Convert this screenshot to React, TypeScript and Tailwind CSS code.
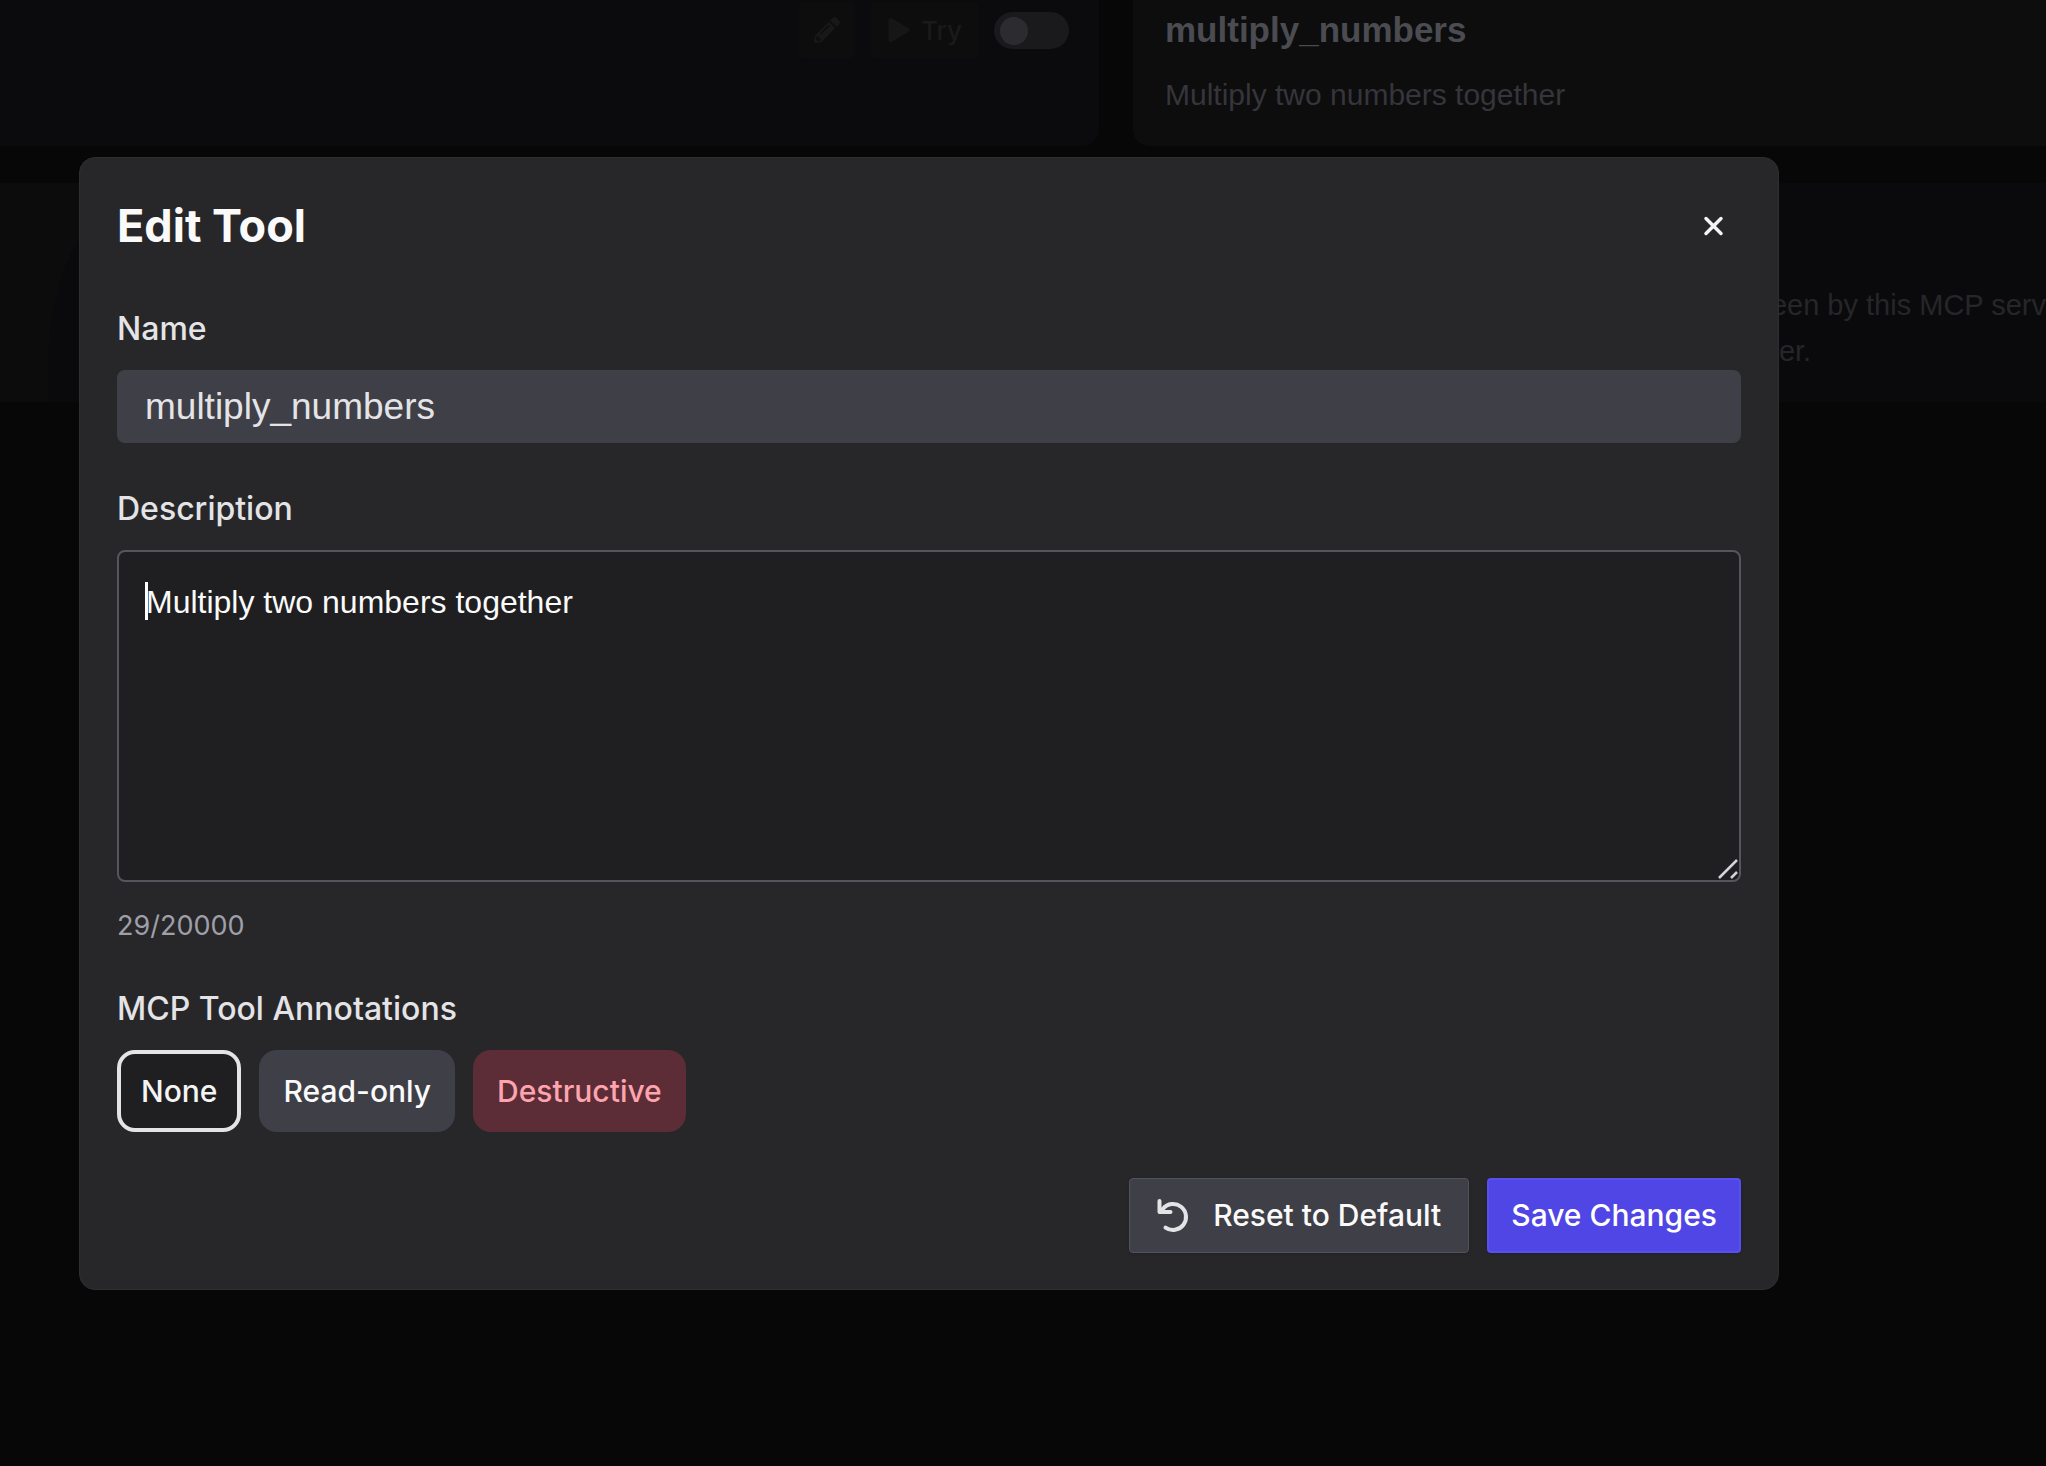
import { useState } from "react";
import { FaPencilAlt, FaPlay } from "react-icons/fa";

const MAX_LENGTH = 20000;

const annotations = [
  { id: "none", label: "None", className: "bg-[#1f1f21] text-zinc-100" },
  { id: "read-only", label: "Read-only", className: "bg-zinc-700 text-zinc-50" },
  { id: "destructive", label: "Destructive", className: "bg-[#5c2d36] text-[#fda4af]" },
];

function UndoIcon() {
  return (
    <svg
      width="34"
      height="34"
      viewBox="0 0 34 34"
      fill="none"
      stroke="currentColor"
      strokeWidth="4"
      className="text-zinc-200"
      aria-hidden
    >
      <path d="M2.500 2v11h11" strokeLinecap="round" strokeLinejoin="round" />
      <path d="M3 12.500L6 9.700A13 13 0 1 1 8.500 28.600" strokeLinecap="round" />
    </svg>
  );
}

function ToolsBackdrop() {
  return (
    <div className="absolute inset-0 overflow-hidden font-['Liberation_Sans',sans-serif]" aria-hidden>
      <div className="grid grid-cols-[1099fr_913fr] gap-[34px]">
        <div className="flex h-[146px] items-start justify-end gap-4 rounded-br-2xl bg-[#0b0b0d] pr-[30px] pt-[2px]">
          <button type="button" className="flex size-14 items-center justify-center rounded bg-[#0d0d0d] text-[#181818]">
            <FaPencilAlt size={26} />
          </button>
          <button
            type="button"
            className="flex h-14 items-center gap-2.5 rounded bg-[#0d0d0d] px-4 font-['Inter',sans-serif] text-[26px] font-medium text-[#1a1a1a]"
          >
            <FaPlay size={24} className="text-[#161616]" />
            Try
          </button>
          <span className="mt-[10px] flex h-[37px] w-[75px] items-center rounded-full bg-[#1a1a1c] px-[6px]">
            <span className="size-7 rounded-full bg-[#2c2c30]" />
          </span>
        </div>
        <div className="h-[146px] rounded-bl-2xl bg-[#0d0d0d] pl-8 pt-[10px]">
          <h2 className="text-[35px] leading-10 font-bold text-[#4b4b52]">multiply_numbers</h2>
          <p className="mt-[25px] text-[30px] leading-10 text-[#35353b]">Multiply two numbers together</p>
        </div>
      </div>
      <div className="mt-[37px] h-[219px] bg-[#0c0c0c] pl-12">
        <div className="flex h-full justify-end rounded-tl-[108px_184px] bg-[#0a0a0c] pt-[99px]">
          <p className="text-[29px] leading-[46px] whitespace-nowrap text-[#262628]">
            een by this MCP serv
            <br />
            <span className="pl-2">er.</span>
          </p>
        </div>
      </div>
    </div>
  );
}

export default function App() {
  const [name, setName] = useState("multiply_numbers");
  const [description, setDescription] = useState("Multiply two numbers together");
  const [annotation, setAnnotation] = useState("none");

  return (
    <div className="relative min-h-screen bg-[#070707] font-['Inter',sans-serif]">
      <ToolsBackdrop />

      <div className="relative pt-[157px] pr-[267px] pb-20 pl-[79px]">
        <form
          role="dialog"
          aria-labelledby="dialog-title"
          onSubmit={(e) => e.preventDefault()}
          className="rounded-2xl border border-[#2e2e31] bg-[#272729] px-[37px] pt-10 pb-9"
        >
          <div className="flex items-center justify-between">
            <h1 id="dialog-title" className="text-[45px] leading-[56px] font-bold text-zinc-50">
              Edit Tool
            </h1>
            <button type="button" aria-label="Close" className="flex size-14 items-center justify-center text-zinc-100">
              <svg width="22" height="22" viewBox="0 0 22 22" stroke="currentColor" strokeWidth="3.500" strokeLinecap="round" aria-hidden>
                <path d="M4 3.500l15 15M19 3.500l-15 15" />
              </svg>
            </button>
          </div>

          <div className="mt-[55px] flex flex-col gap-[21px]">
            <label htmlFor="name" className="text-[32px] leading-10 font-medium text-zinc-200">
              Name
            </label>
            <input
              id="name"
              value={name}
              onChange={(e) => setName(e.target.value)}
              className="h-[73px] w-full rounded-lg bg-zinc-700 px-7 font-['Liberation_Sans',sans-serif] text-[37px] text-zinc-200 outline-none"
            />
          </div>

          <div className="mt-[46px] flex flex-col gap-[21px]">
            <label htmlFor="description" className="text-[32px] leading-10 font-medium text-zinc-200">
              Description
            </label>
            <div className="relative flex">
              <textarea
                id="description"
                value={description}
                maxLength={MAX_LENGTH}
                onChange={(e) => setDescription(e.target.value)}
                className="h-[332px] w-full resize-none rounded-lg border-2 border-[#55555d] bg-[#1f1f21] px-[27px] py-7 font-['Liberation_Sans',sans-serif] text-[32px] leading-[44px] text-zinc-50 outline-none"
              />
              <span className="absolute top-8 left-7 h-[38px] w-[3px] bg-white" aria-hidden />
              <svg className="absolute right-[3px] bottom-[3px]" width="20" height="20" viewBox="0 0 20 20" stroke="#d4d4d8" strokeWidth="2.500" aria-hidden>
                <path d="M1 19L19 1M13 19l6-6" />
              </svg>
            </div>
          </div>
          <p className="mt-7 text-[27px] leading-8 text-zinc-400">
            {description.length}/{MAX_LENGTH}
          </p>

          <div className="mt-[47px] flex flex-col gap-[21px]">
            <h2 className="text-[32px] leading-10 font-medium text-zinc-200">MCP Tool Annotations</h2>
            <div className="flex gap-[18px]">
              {annotations.map((a) => (
                <button
                  key={a.id}
                  type="button"
                  aria-pressed={annotation === a.id}
                  onClick={() => setAnnotation(a.id)}
                  className={`h-[82px] rounded-[18px] border-4 px-5 text-[30px] font-medium ${a.className} ${
                    annotation === a.id ? "border-zinc-200" : "border-transparent"
                  }`}
                >
                  {a.label}
                </button>
              ))}
            </div>
          </div>

          <div className="mt-[46px] flex justify-end gap-[18px]">
            <button
              type="button"
              onClick={() => {
                setName("multiply_numbers");
                setDescription("Multiply two numbers together");
              }}
              className="flex h-[75px] items-center gap-[22px] rounded border border-zinc-600 bg-zinc-700 px-[27px] text-[30px] font-medium text-zinc-50 shadow"
            >
              <UndoIcon />
              Reset to Default
            </button>
            <button
              type="submit"
              className="h-[75px] rounded border-2 border-[#584ff0] bg-[#4f46e5] px-[22px] text-[30px] font-medium text-white shadow"
            >
              Save Changes
            </button>
          </div>
        </form>
      </div>
    </div>
  );
}
